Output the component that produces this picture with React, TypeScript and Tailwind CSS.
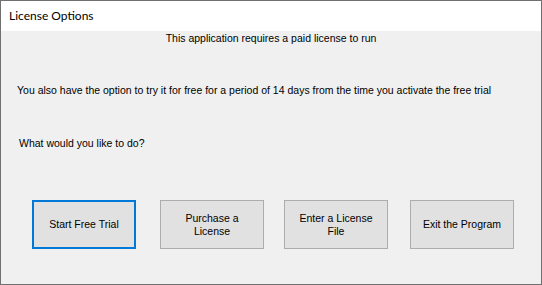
const buttons = [
  { label: "Start Free Trial", ml: "ml-[31px]", focused: true },
  { label: "Purchase a\nLicense", ml: "ml-[24px]", focused: false },
  { label: "Enter a License\nFile", ml: "ml-[20px]", focused: false },
  { label: "Exit the Program", ml: "ml-[22px]", focused: false },
];

export default function App() {
  return (
    <div className="w-[542px] h-[285px] border border-[#707070] bg-[#f0f0f0] flex flex-col font-['Liberation_Sans',Arial,sans-serif] text-[10.5px] leading-[13px] text-black overflow-hidden">
      <div className="h-[30px] bg-white flex items-center pl-[8px] shrink-0">
        <span className="font-['Lato',sans-serif] text-[12px] leading-[16px] text-black">
          License Options
        </span>
      </div>

      <p className="mt-[1px] text-center">This application requires a paid license to run</p>

      <p className="mt-[39px] pl-[16px]">
        You also have the option to try it for free for a period of 14 days from the time you activate the free trial
      </p>

      <p className="mt-[40px] pl-[18px]">What would you like to do?</p>

      <div className="mt-[50px] flex">
        {buttons.map((b) => (
          <button
            key={b.label}
            className={`${b.ml} w-[104px] h-[49px] bg-[#e1e1e1] flex items-center justify-center text-center whitespace-pre-line ${
              b.focused ? "border-2 border-[#0078d7]" : "border border-[#adadad]"
            }`}
          >
            {b.label}
          </button>
        ))}
      </div>
    </div>
  );
}
